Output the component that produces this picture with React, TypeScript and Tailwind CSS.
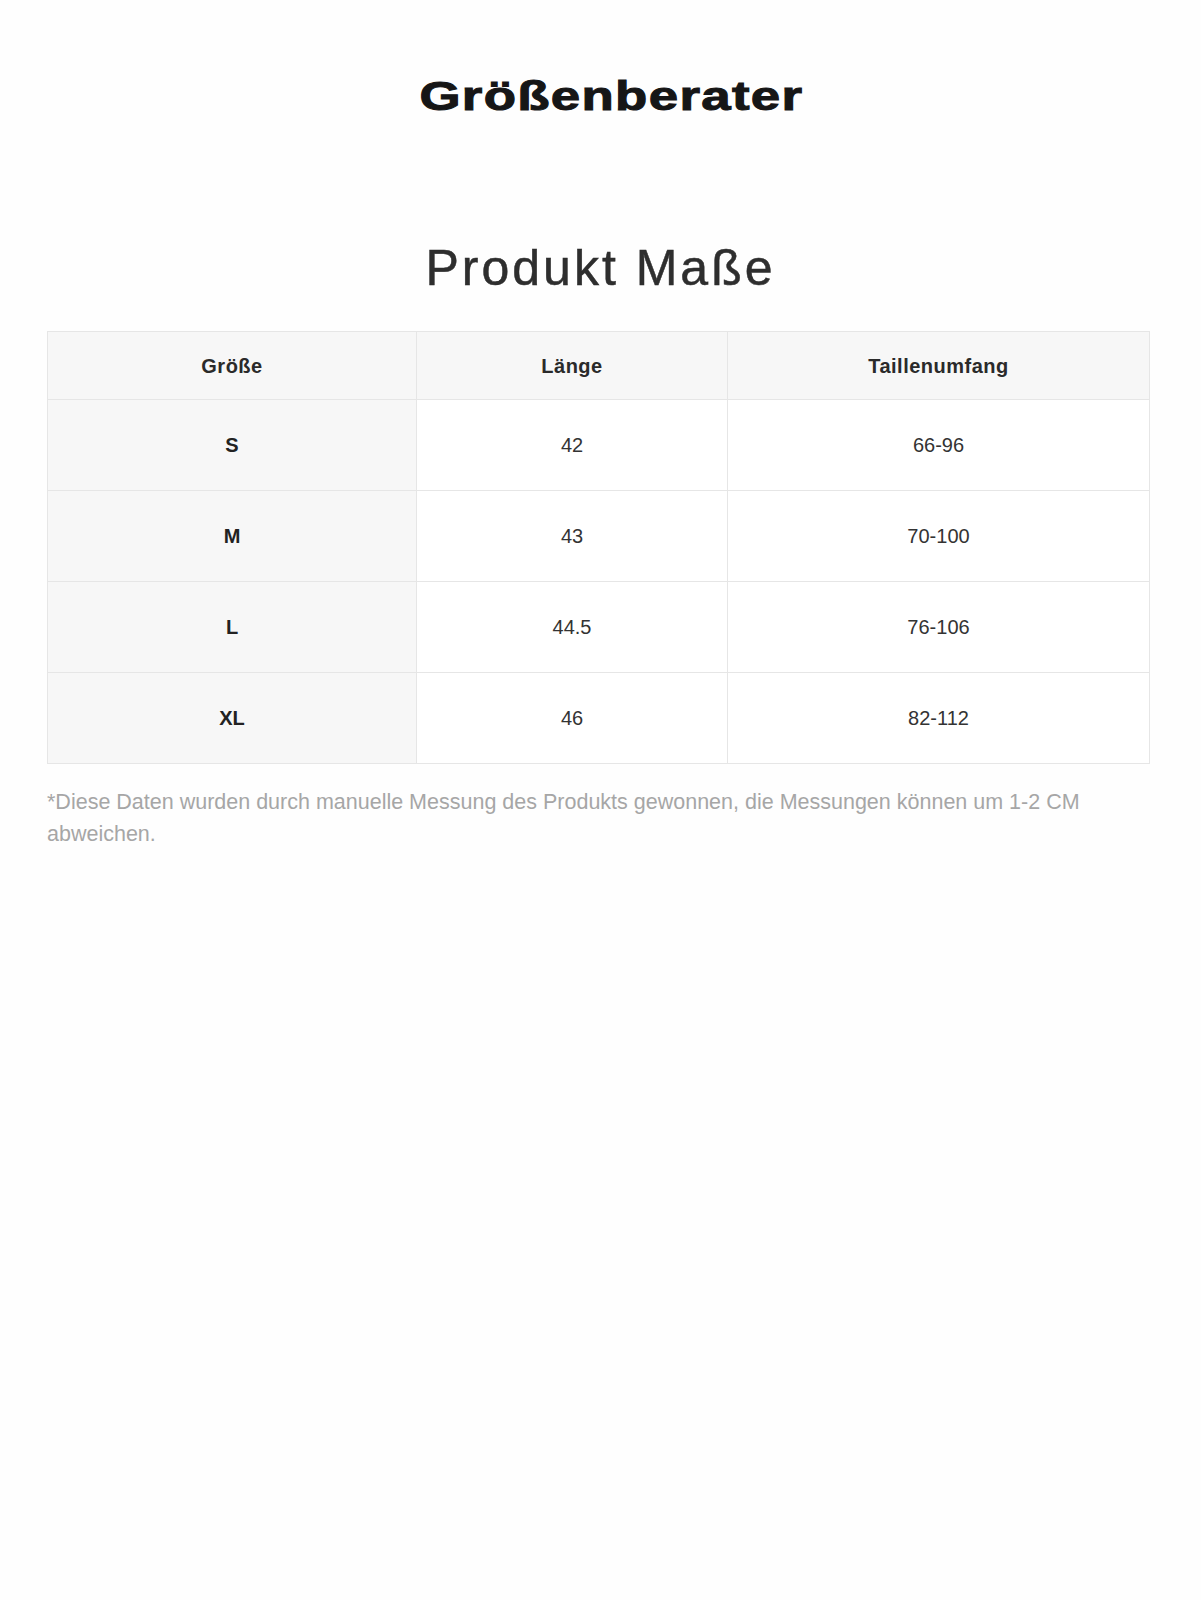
const rows = [
  { size: 'S', length: '42', waist: '66-96' },
  { size: 'M', length: '43', waist: '70-100' },
  { size: 'L', length: '44.5', waist: '76-106' },
  { size: 'XL', length: '46', waist: '82-112' }
]

const headers = ['Größe', 'Länge', 'Taillenumfang']

export default function App(): React.JSX.Element {
  return (
    <div className="min-h-[1600px] w-full bg-[#fefefe] font-['Liberation_Sans',Arial,sans-serif]">
      {/* Titel */}
      <div className="flex justify-center pl-[22px] pt-[73px]">
        <h1 className="inline-block origin-center scale-x-[1.32] text-[40px] font-bold leading-[46px] tracking-[1px] text-[#161616] [-webkit-text-stroke:1px_#161616]">
          Größenberater
        </h1>
      </div>

      {/* Untertitel */}
      <h2 className="mt-[120px] text-center text-[50px] font-normal leading-[58px] tracking-[3px] text-[#2e2e2e] [-webkit-text-stroke:0.5px_#2e2e2e]">
        Produkt Maße
      </h2>

      {/* Tabelle */}
      <div className="ml-[47px] mt-[34px] w-[1102px]">
        <table className="w-full table-fixed border-collapse">
          <colgroup>
            <col className="w-[369px]" />
            <col className="w-[311px]" />
            <col className="w-[422px]" />
          </colgroup>
          <thead>
            <tr className="h-[68px] bg-[#f7f7f7]">
              {headers.map((h) => (
                <th
                  key={h}
                  className="border border-[#e6e6e6] text-center align-middle text-[20px] font-bold tracking-[0.5px] text-[#2a2a2a]"
                >
                  {h}
                </th>
              ))}
            </tr>
          </thead>
          <tbody>
            {rows.map((r) => (
              <tr key={r.size} className="h-[91px]">
                <td className="border border-[#e6e6e6] bg-[#f7f7f7] text-center align-middle text-[20px] font-bold text-[#222]">
                  {r.size}
                </td>
                <td className="border border-[#e6e6e6] bg-white text-center align-middle text-[20px] text-[#333]">
                  {r.length}
                </td>
                <td className="border border-[#e6e6e6] bg-white text-center align-middle text-[20px] text-[#333]">
                  {r.waist}
                </td>
              </tr>
            ))}
          </tbody>
        </table>

        {/* Hinweis */}
        <p className="mt-[22px] text-[21.5px] leading-[32px] text-[#a6a6a6]">
          *Diese Daten wurden durch manuelle Messung des Produkts gewonnen, die Messungen können um 1-2 CM abweichen.
        </p>
      </div>
    </div>
  )
}
